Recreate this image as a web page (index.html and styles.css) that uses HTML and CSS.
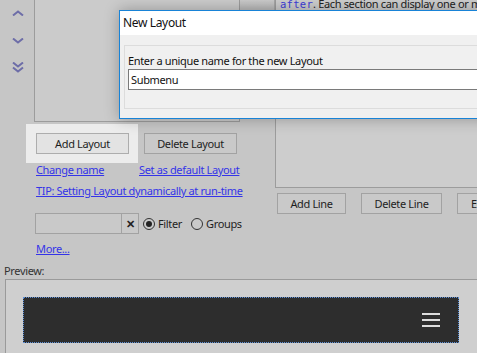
FILE: index.html
```html
<!DOCTYPE html>
<html>
<head>
<meta charset="utf-8">
<link rel="stylesheet" href="styles.css">
</head>
<body>
<div class="page">
  <div class="top">
    <div class="arrows">
      <svg class="chev" width="12" height="6" viewBox="0 0 12 6"><path d="M1 5.5 L6 1.5 L11 5.5" fill="none" stroke="#6d6da8" stroke-width="2"/></svg>
      <svg class="chev" width="12" height="6" viewBox="0 0 12 6"><path d="M1 0.5 L6 4.5 L11 0.5" fill="none" stroke="#6d6da8" stroke-width="2"/></svg>
      <svg class="chev" width="12" height="11" viewBox="0 0 12 11"><path d="M1 0.5 L6 4.5 L11 0.5 M1 5.5 L6 9.5 L11 5.5" fill="none" stroke="#6d6da8" stroke-width="2"/></svg>
    </div>
    <div class="left">
      <div class="listbox"></div>
      <div class="btnrow">
        <span class="spotlight"><button class="btn lit">Add Layout</button></span>
        <button class="btn w93">Delete Layout</button>
      </div>
      <div class="linkrow pair">
        <a class="link">Change name</a>
        <a class="link">Set as default Layout</a>
      </div>
      <div class="linkrow tip"><a class="link">TIP: Setting Layout dynamically at run-time</a></div>
      <div class="filterrow">
        <div class="filterbox"><span class="fill"></span><span class="clear">✕</span></div>
        <label class="radio"><span class="circle on"></span>Filter</label>
        <label class="radio"><span class="circle"></span>Groups</label>
      </div>
      <div class="linkrow more"><a class="link">More...</a></div>
    </div>
    <div class="gapcol"><div class="header"></div></div>
    <div class="right">
      <div class="editor"><p class="desc"><code>after</code>. Each section can display one or more lines</p></div>
      <div class="btnrow2">
        <button class="btn w70">Add Line</button>
        <button class="btn w82">Delete Line</button>
        <button class="btn w70">Edit Line</button>
      </div>
    </div>
  </div>
  <div class="preview-label">Preview:</div>
  <div class="preview">
    <div class="navbar">
      <div class="burger"><i></i><i></i><i></i></div>
    </div>
  </div>

  <div class="dialog">
    <div class="titlebar">New Layout</div>
    <div class="dbody">
      <div class="group">
        <div class="glabel">Enter a unique name for the new Layout</div>
        <div class="input">Submenu</div>
      </div>
    </div>
  </div>
</div>
</body>
</html>
```
FILE: styles.css
```css
* { box-sizing: border-box; }
html, body { margin: 0; padding: 0; }
body {
  width: 477px; height: 353px; overflow: hidden;
  background: #c6c6c6;
  font-family: "Noto Sans", "Segoe UI", sans-serif;
  font-size: 11px;
  letter-spacing: -0.35px;
  color: #1e1e1e;
}
.page { position: relative; width: 477px; height: 353px; overflow: hidden; }
.top { display: flex; height: 262px; }
.arrows {
  width: 34px; flex-shrink: 0; display: flex; flex-direction: column; align-items: center;
  padding-top: 10px;
}
.chev { display: block; flex-shrink: 0; }
.arrows .chev:nth-child(1) { margin-left: 2px; }
.arrows .chev:nth-child(2) { margin-top: 22px; margin-left: 2px; }
.arrows .chev:nth-child(3) { margin-top: 18px; margin-left: 2px; }
.left { width: 206px; flex-shrink: 0; display: flex; flex-direction: column; }
.left > * { flex-shrink: 0; }
.listbox {
  width: 206px; height: 123px; margin-top: -1px;
  border: 1px solid #9c9c9c; background: #cbcbcb;
}
.gapcol { width: 35px; flex-shrink: 0; }
.header { height: 10px; background: linear-gradient(#cacaca, #b9b9b9); border-right: 1px solid #a6a6a6; }
.btnrow { display: flex; margin-top: 11px; padding-left: 2px; gap: 15px; }
.spotlight {
  display: block; background: #ececec;
  padding: 9px 9px 9px 10px; margin: -9px -9px -9px -10px;
  position: relative; z-index: 1;
}
.btn {
  font: inherit; font-size: 11px; color: #1e1e1e; letter-spacing: -0.35px;
  height: 21px; border: 1px solid #a2a2a2; background: #c9c9c9;
  padding: 0; display: block; flex-shrink: 0; white-space: nowrap;
}
.lit { width: 93px; background: #e3e3e3; border-color: #adadad; }
.w93 { width: 93px; }
.w70 { width: 69px; }
.w82 { width: 81px; }
.linkrow { display: flex; padding-left: 2px; margin-top: 8px; line-height: 15px; white-space: nowrap; }
.pair { display: grid; grid-template-columns: 103px auto; justify-content: start; }
.pair .link { justify-self: start; }
.link { color: #3434e8; text-decoration: underline; }
.tip { margin-top: 6px; }
.filterrow { display: flex; align-items: center; margin-top: 15px; padding-left: 1px; height: 21px; }
.filterbox { width: 104px; height: 21px; border: 1px solid #a2a2a2; display: flex; background: #c9c9c9; flex-shrink: 0; }
.fill { flex: 1; }
.clear { width: 17px; border-left: 1px solid #a2a2a2; display: flex; align-items: center; justify-content: center; font-size: 11px; color: #222; font-weight: bold; }
.radio { display: flex; align-items: center; margin-left: 4px; font-size: 11px; color: #1e1e1e; }
.radio + .radio { margin-left: 9px; }
.circle { width: 12px; height: 12px; border: 1px solid #333; border-radius: 50%; margin-right: 3px; background: #cacaca; display: flex; align-items: center; justify-content: center; }
.circle.on::after { content: ""; width: 6px; height: 6px; border-radius: 50%; background: #222; }
.more { margin-top: 7px; }
.right { flex: 1; min-width: 0; display: flex; flex-direction: column; }
.editor {
  height: 188px; border: 1px solid #9c9c9c; border-top: none; border-right: none;
  background: #cdcdcd; overflow: hidden; flex-shrink: 0;
}
.desc { margin: -4px 0 0 4px; line-height: 15px; white-space: nowrap; font-size: 11px; color: #222; }
.desc code { font-family: "DejaVu Sans Mono", monospace; color: #3c3cd8; font-size: 10.5px; letter-spacing: 0.3px; }
.btnrow2 { display: flex; gap: 15px; margin-top: 5px; padding-left: 2px; }
.preview-label { margin: 1px 0 0 4px; line-height: 15px; font-size: 11px; color: #333; }
.preview {
  margin: 1px 0 0 5px; height: 80px; border-top: 1px solid #9a9a9a; border-left: 1px solid #9a9a9a;
  background: #cfcfcf; padding: 17px 0 0 17px;
}
.navbar {
  width: 436px; height: 46px; background: #2d2d2d;
  border: 1px dotted #5c8fd6;
  display: flex; align-items: center; justify-content: flex-end; padding-right: 18px;
}
.burger { display: flex; flex-direction: column; gap: 4px; margin-top: -1px; }
.burger i { display: block; width: 18px; height: 2px; background: #dcdcdc; }
.dialog {
  position: absolute; left: 119px; top: 10px; width: 400px; height: 109px;
  border: 1px solid #1883d7; background: #f0f0f0;
  box-shadow: 0 0 14px rgba(0,0,0,0.28);
  z-index: 5;
}
.titlebar { height: 24px; background: #fff; padding-left: 3px; line-height: 24px; font-size: 12px; color: #111; }
.dbody { padding: 10px 0 0 4px; }
.group { height: 64px; border: 1px solid #dcdcdc; padding: 7px 0 0 3px; }
.glabel { line-height: 15px; font-size: 11px; color: #111; }
.input { height: 21px; margin-top: 1px; border: 1px solid #7a7a7a; border-right: none; background: #fff; padding-left: 2px; line-height: 19px; font-size: 11px; color: #111; }
```
